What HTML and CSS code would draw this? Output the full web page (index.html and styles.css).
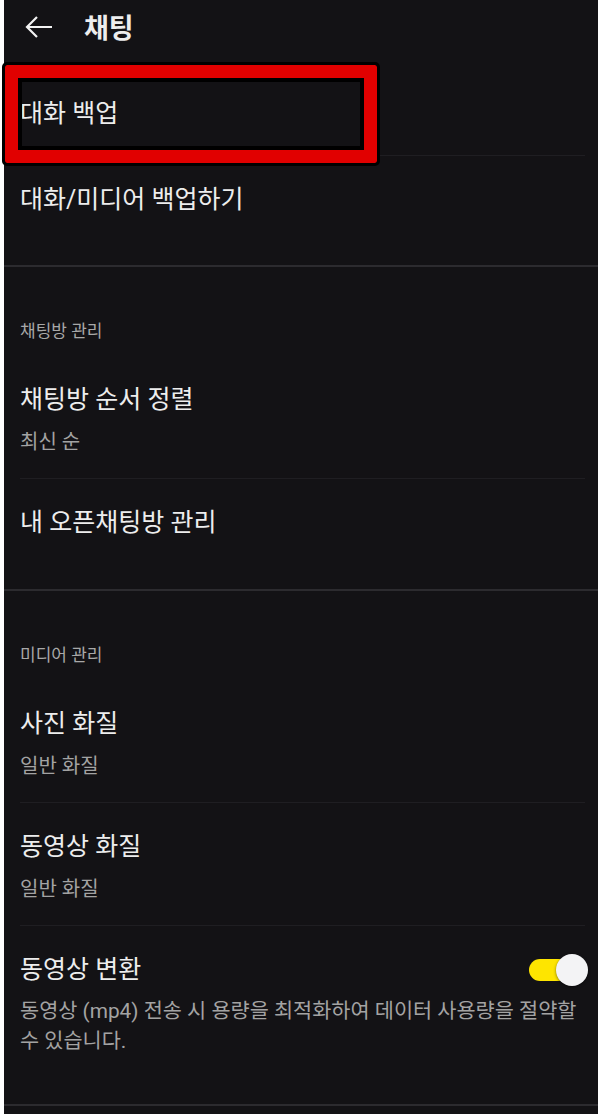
FILE: index.html
```html
<!DOCTYPE html>
<html lang="ko">
<head>
  <meta charset="UTF-8">
  <meta name="viewport" content="width=device-width, initial-scale=1.0">
  <title>채팅 설정</title>
  <link rel="stylesheet" href="styles.css">
</head>
<body>
  <div class="screen">
    <div class="topbar">
      <svg class="back" width="30" height="28" viewBox="0 0 30 28">
        <path d="M28 14H3M13 4L3 14l10 10" fill="none" stroke="#f2f2f2" stroke-width="2.2"/>
      </svg>
      <h1>채팅</h1>
    </div>

    <div class="section first">
      <div class="item single">
        <div class="item-title">대화 백업</div>
      </div>
      <div class="item single">
        <div class="item-title">대화/미디어 백업하기</div>
      </div>
    </div>

    <div class="section">
      <div class="section-title">채팅방 관리</div>
      <div class="item">
        <div class="item-title">채팅방 순서 정렬</div>
        <div class="item-sub">최신 순</div>
      </div>
      <div class="item single">
        <div class="item-title">내 오픈채팅방 관리</div>
      </div>
    </div>

    <div class="section">
      <div class="section-title">미디어 관리</div>
      <div class="item">
        <div class="item-title">사진 화질</div>
        <div class="item-sub">일반 화질</div>
      </div>
      <div class="item">
        <div class="item-title">동영상 화질</div>
        <div class="item-sub">일반 화질</div>
      </div>
      <div class="item last">
        <div class="item-row">
          <div class="item-title">동영상 변환</div>
          <span class="switch on"></span>
        </div>
        <div class="item-desc">동영상 (mp4) 전송 시 용량을 최적화하여 데이터 사용량을 절약할 수 있습니다.</div>
      </div>
    </div>

    <!-- 강조 표시 -->
    <div class="mark"></div>
  </div>
</body>
</html>
```

FILE: styles.css
```css
body {
  margin: 0;
  background-color: #ffffff;
  font-family: Roboto, "Noto Sans CJK KR", sans-serif;
}
.screen {
  position: relative;
  margin-left: 4px;
  min-height: 1114px;
  background-color: #131215;
  color: #ededed;
}
.topbar {
  height: 56px;
  display: flex;
  align-items: center;
}
.back {
  margin-left: 20px;
  margin-top: -2px;
}
.topbar h1 {
  margin: 2px 0 0 30px;
  font-size: 27px;
  font-weight: 700;
  line-height: 32px;
}
.section {
  padding-bottom: 25px;
  border-bottom: 2px solid #2c2b2f;
}
.section.first {
  padding-top: 14px;
  padding-bottom: 24px;
}
.section-title {
  padding: 52px 16px 13px;
  font-size: 17px;
  line-height: 24px;
  color: #a8a8a8;
}
.item {
  margin: 0 13px 0 16px;
  padding: 29px 0 23px;
}
.item.single {
  padding-bottom: 26px;
}
.item + .item {
  border-top: 1px solid #1f1e22;
}
.item.last {
  padding-bottom: 23px;
}
.item-title {
  font-size: 25px;
  line-height: 30px;
}
.item-sub {
  margin-top: 14px;
  font-size: 20px;
  line-height: 26px;
  color: #a3a3a3;
}
.item-row {
  display: flex;
  align-items: center;
  justify-content: space-between;
  height: 30px;
}
.item-desc {
  margin-top: 11px;
  font-size: 20.8px;
  line-height: 30px;
  color: #a3a3a3;
}
.switch {
  position: relative;
  width: 59px;
  height: 32px;
  margin-right: -3px;
}
.switch::before {
  content: "";
  position: absolute;
  left: 0;
  top: 5px;
  width: 46px;
  height: 22px;
  border-radius: 11px;
  background-color: #fee500;
}
.switch::after {
  content: "";
  position: absolute;
  right: 0;
  top: 0;
  width: 32px;
  height: 32px;
  border-radius: 50%;
  background-color: #f3f3f5;
  box-shadow: 0 1px 3px rgba(0,0,0,0.5);
}
.mark {
  position: absolute;
  left: -2px;
  top: 62px;
  width: 372px;
  height: 98px;
  border: 3px solid #000;
  border-radius: 5px;
  box-shadow: inset 0 0 0 13px #e10000, inset 0 0 0 17px #000;
}
```
